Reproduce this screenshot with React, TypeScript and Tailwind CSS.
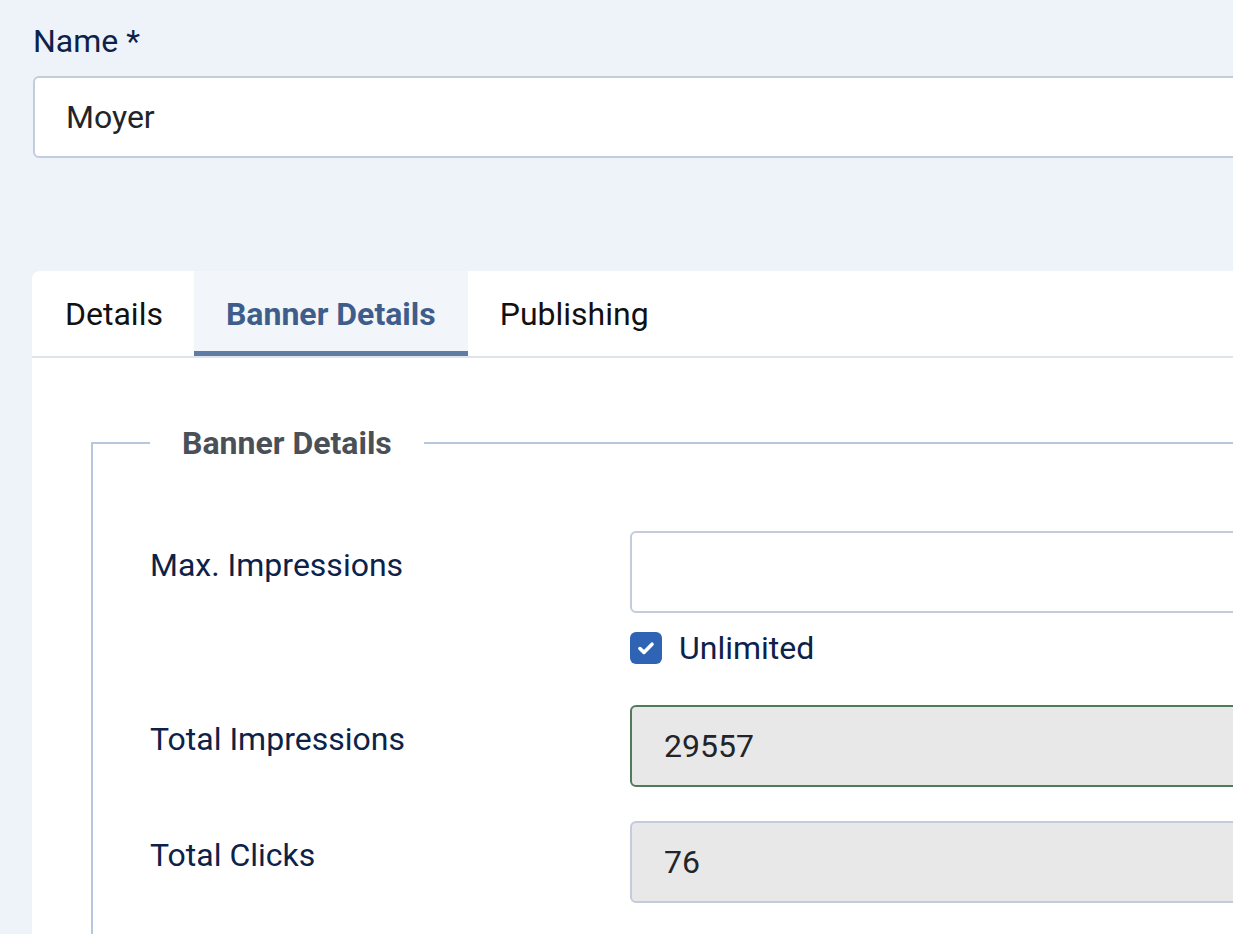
import React from "react";

function Field({
  label,
  value,
  readOnly,
  borderClass,
  children,
}: {
  label: string;
  value: string;
  readOnly?: boolean;
  borderClass: string;
  children?: React.ReactNode;
}) {
  return (
    <div className="flex">
      <div className="w-[480px] shrink-0 pt-[10px] text-[32px] leading-[48px] text-[#0d2248]">
        {label}
      </div>
      <div className="flex-1 min-w-0">
        <div
          className={`h-[82px] rounded-[6px] border-2 ${borderClass} ${
            readOnly ? "bg-[#e8e8e8]" : "bg-white"
          } flex items-center pl-[32px] text-[32px] text-[#212529]`}
        >
          {value}
        </div>
        {children}
      </div>
    </div>
  );
}

export default function App() {
  return (
    <div
      className="w-[1233px] h-[934px] overflow-hidden bg-[#eef3fa]"
      style={{ fontFamily: "Roboto, 'Noto Sans', sans-serif" }}
    >
      <div className="pl-[33px] pt-[17px] w-[1400px]">
        <div className="text-[32px] leading-[48px] text-[#0d2248] mb-[11px]">Name *</div>
        <div className="h-[82px] rounded-[6px] border-2 border-[#c3cbdc] bg-white flex items-center pl-[31px] text-[32px] text-[#212529]">
          Moyer
        </div>
      </div>

      <div className="mt-[113px] ml-[32px] w-[1400px] bg-white rounded-tl-[8px] h-[700px]">
        <div className="flex border-b-2 border-[#dde4ec] h-[87px]">
          <div className="pl-[33px] pr-[31px] flex items-center text-[32px] text-[#111] pt-[6px] pb-[5px]">Details</div>
          <div className="px-[32px] flex items-center text-[32px] font-bold text-[#3e5d8b] bg-[#f2f5f9] pt-[6px] border-b-[5px] border-[#5f7ca4]">
            Banner Details
          </div>
          <div className="px-[32px] flex items-center text-[32px] text-[#111] pt-[6px] pb-[5px]">Publishing</div>
        </div>

        <div className="pl-[59px] pt-[61px]">
          <fieldset className="border-t-2 border-l-2 border-[#b7c8dd] pl-[57px] pt-[64px] h-[600px]">
            <legend className="px-[32px] text-[32px] leading-[48px] font-bold text-[#495057]">
              Banner Details
            </legend>
            <div className="flex flex-col">
              <Field label="Max. Impressions" value="" borderClass="border-[#c3cbdc]">
                <div className="mt-[11px] flex items-center h-[48px] gap-[17px]">
                  <div className="w-[32px] h-[32px] rounded-[6px] bg-[#2f64b4] flex items-center justify-center">
                    <svg width="22" height="22" viewBox="0 0 16 16" fill="none">
                      <path d="M3.6 8.4l2.9 2.8L12.4 5.2" stroke="white" strokeWidth="2.6" strokeLinecap="round" strokeLinejoin="round" />
                    </svg>
                  </div>
                  <span className="text-[32px] leading-[48px] text-[#0d2248]">Unlimited</span>
                </div>
              </Field>
              <div className="h-[33px]" />
              <Field label="Total Impressions" value="29557" readOnly borderClass="border-[#517a58]" />
              <div className="h-[34px]" />
              <Field label="Total Clicks" value="76" readOnly borderClass="border-[#c3cbdc]" />
            </div>
          </fieldset>
        </div>
      </div>
    </div>
  );
}
